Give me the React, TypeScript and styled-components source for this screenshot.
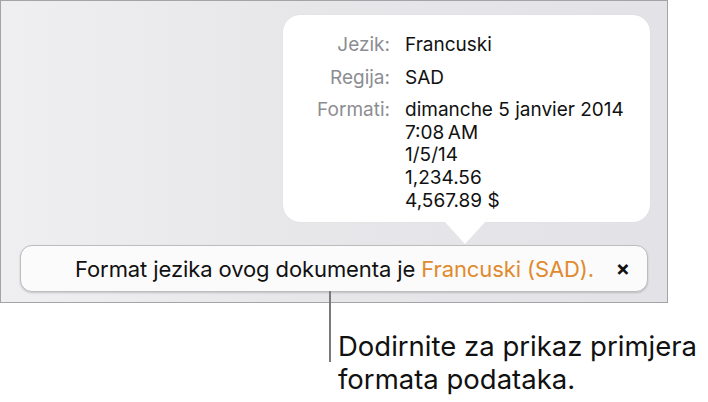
import React from "react";
import styled, { createGlobalStyle } from "styled-components";

const Global = createGlobalStyle`
  html, body { margin: 0; padding: 0; background: #ffffff; }
  body { font-family: Inter, "Noto Sans", sans-serif; -webkit-font-smoothing: antialiased; }
`;

const Page = styled.div`
  width: 708px;
  height: 402px;
  overflow: hidden;
  background: #ffffff;
`;

const Panel = styled.div`
  box-sizing: border-box;
  width: 668px;
  height: 303px;
  border: 1px solid #a4a4a6;
  background: linear-gradient(to right, #efeff1 0%, #e7e7ea 45%, #e3e3e7 100%);
  display: flex;
  flex-direction: column;
  padding: 14px 0 0 19px;
`;

const Bubble = styled.div`
  position: relative;
  box-sizing: border-box;
  align-self: flex-start;
  margin-left: 263px;
  width: 367px;
  height: 207px;
  background: #ffffff;
  border-radius: 17px;
  box-shadow: 0 0 1px rgba(0, 0, 0, 0.12);
  padding: 19px 0 0 24px;
  display: grid;
  grid-template-columns: 83px auto;
  column-gap: 15px;
  row-gap: 10px;
  align-content: start;

  &::after {
    content: "";
    position: absolute;
    left: 161px;
    bottom: -22px;
    width: 0;
    height: 0;
    border-left: 21px solid transparent;
    border-right: 21px solid transparent;
    border-top: 23px solid #ffffff;
  }
`;

const Label = styled.div`
  text-align: right;
  font-size: 19px;
  line-height: 22.6px;
  color: #8d8d91;
`;

const Value = styled.div`
  font-size: 19px;
  line-height: 22.6px;
  color: #111111;
  white-space: pre-line;
`;

const Banner = styled.div`
  box-sizing: border-box;
  margin-top: 23px;
  width: 628px;
  height: 47px;
  background: #fbfbfb;
  border: 1px solid #bdbdc0;
  border-radius: 12px;
  box-shadow: 0 1px 2px rgba(0, 0, 0, 0.18);
  display: flex;
  align-items: center;
  padding: 0 17px 0 54px;
`;

const Message = styled.span`
  font-size: 22px;
  color: #111111;
  letter-spacing: -0.1px;
`;

const Accent = styled.span`
  color: #e08a2e;
`;

const Close = styled.span`
  margin-left: auto;
  font-size: 21px;
  font-weight: 700;
  color: #111111;
  line-height: 1;
`;

const Caption = styled.div`
  display: flex;
  align-items: flex-start;
  margin-left: 329px;
`;

const Leader = styled.div`
  width: 2px;
  height: 71px;
  margin-top: -12px;
  background: #7a7a7c;
  flex: none;
`;

const CaptionText = styled.div`
  margin-left: 7px;
  margin-top: 27px;
  font-size: 27.5px;
  line-height: 33px;
  color: #111111;
`;

export default function App() {
  return (
    <Page>
      <Global />
      <Panel>
        <Bubble>
          <Label>Jezik:</Label>
          <Value>Francuski</Value>
          <Label>Regija:</Label>
          <Value>SAD</Value>
          <Label>Formati:</Label>
          <Value>{"dimanche 5 janvier 2014\n7:08\u2009AM\n1/5/14\n1,234.56\n4,567.89 $"}</Value>
        </Bubble>
        <Banner>
          <Message>
            Format jezika ovog dokumenta je <Accent>Francuski (SAD).</Accent>
          </Message>
          <Close>×</Close>
        </Banner>
      </Panel>
      <Caption>
        <Leader />
        <CaptionText>
          Dodirnite za prikaz primjera
          <br />
          formata podataka.
        </CaptionText>
      </Caption>
    </Page>
  );
}
